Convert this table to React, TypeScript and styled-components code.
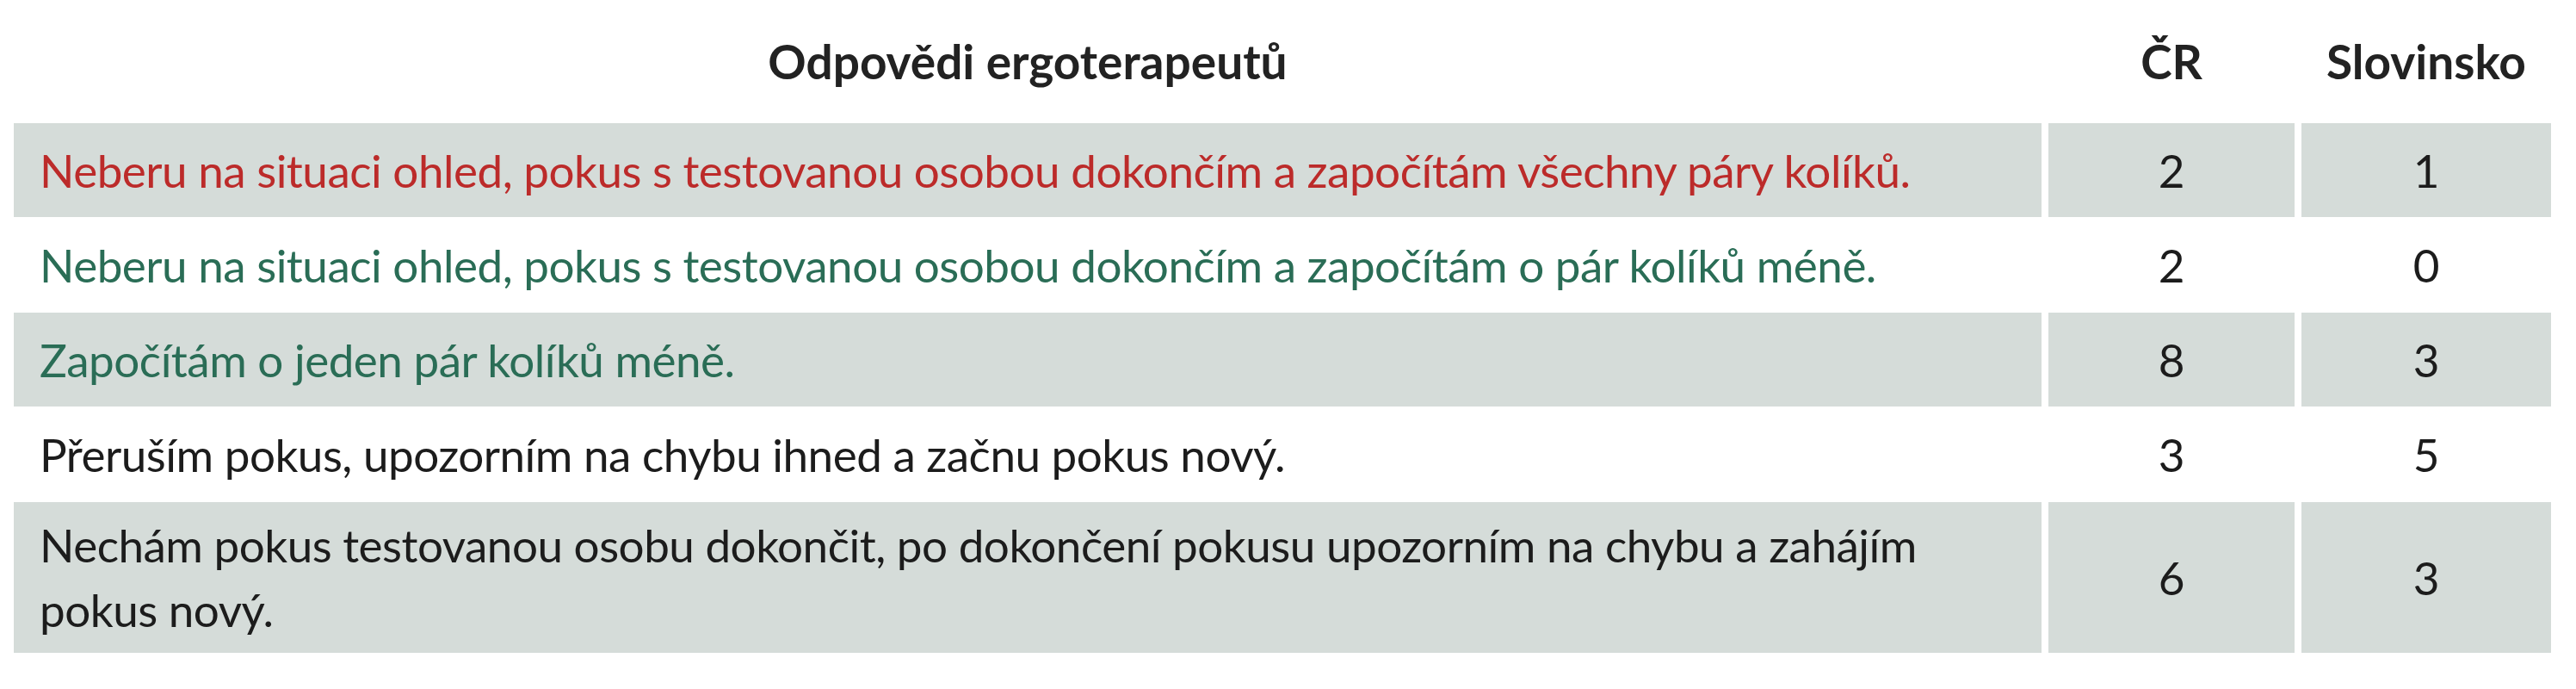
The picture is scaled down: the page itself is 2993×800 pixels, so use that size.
import React from 'react';
import styled, { createGlobalStyle } from 'styled-components';

type Tone = 'red' | 'green' | 'plain';

interface Answer {
  text: string;
  cz: number;
  si: number;
  tone: Tone;
  shaded: boolean;
}

const answers: Answer[] = [
  {
    text: 'Neberu na situaci ohled, pokus s testovanou osobou dokončím a započítám všechny páry kolíků.',
    cz: 2,
    si: 1,
    tone: 'red',
    shaded: true,
  },
  {
    text: 'Neberu na situaci ohled, pokus s testovanou osobou dokončím a započítám o pár kolíků méně.',
    cz: 2,
    si: 0,
    tone: 'green',
    shaded: false,
  },
  {
    text: 'Započítám o jeden pár kolíků méně.',
    cz: 8,
    si: 3,
    tone: 'green',
    shaded: true,
  },
  {
    text: 'Přeruším pokus, upozorním na chybu ihned a začnu pokus nový.',
    cz: 3,
    si: 5,
    tone: 'plain',
    shaded: false,
  },
  {
    text: 'Nechám pokus testovanou osobu dokončit, po dokončení pokusu upozorním na chybu a zahájím pokus nový.',
    cz: 6,
    si: 3,
    tone: 'plain',
    shaded: true,
  },
];

const toneColor = (tone: Tone): string => {
  if (tone === 'red') return '#bc2b2a';
  if (tone === 'green') return '#2a6d56';
  return '#1c1c1c';
};

const App: React.FC = () => {
  return (
    <>
      <GlobalStyle />
      <Table>
        <colgroup>
          <col style={{ width: 2356 }} />
          <col style={{ width: 286 }} />
          <col style={{ width: 290 }} />
        </colgroup>
        <thead>
          <tr>
            <HeadCell>Odpovědi ergoterapeutů</HeadCell>
            <HeadCell>ČR</HeadCell>
            <HeadCell>Slovinsko</HeadCell>
          </tr>
        </thead>
        <tbody>
          {answers.map((a, i) => (
            <tr key={i}>
              <TextCell $shaded={a.shaded} $tone={a.tone}>
                {a.text}
              </TextCell>
              <NumCell $shaded={a.shaded}>{a.cz}</NumCell>
              <NumCell $shaded={a.shaded}>{a.si}</NumCell>
            </tr>
          ))}
        </tbody>
      </Table>
    </>
  );
};

const GlobalStyle = createGlobalStyle`
  body {
    margin: 0;
    background: #ffffff;
    font-family: Lato, "Open Sans", sans-serif;
  }
`;

const Table = styled.table`
  margin-left: 8px;
  border-collapse: separate;
  border-spacing: 8px 1px;
  table-layout: fixed;
  width: 2964px;
  font-size: 53px;
  line-height: 75px;
  letter-spacing: -0.5px;
  color: #1c1c1c;
`;

const HeadCell = styled.th`
  height: 141px;
  padding: 0;
  text-align: center;
  vertical-align: middle;
  font-size: 55px;
  font-weight: 700;
  letter-spacing: 0;
  color: #222222;
`;

const BodyCell = styled.td<{ $shaded: boolean }>`
  height: 84px;
  padding: 12px 30px 13px;
  vertical-align: middle;
  background: ${(p) => (p.$shaded ? '#d5dcd9' : '#ffffff')};
`;

const TextCell = styled(BodyCell)<{ $tone: Tone }>`
  text-align: left;
  color: ${(p) => toneColor(p.$tone)};
`;

const NumCell = styled(BodyCell)`
  text-align: center;
  padding-left: 0;
  padding-right: 0;
  letter-spacing: 0;
  color: #1c1c1c;
`;

export default App;
